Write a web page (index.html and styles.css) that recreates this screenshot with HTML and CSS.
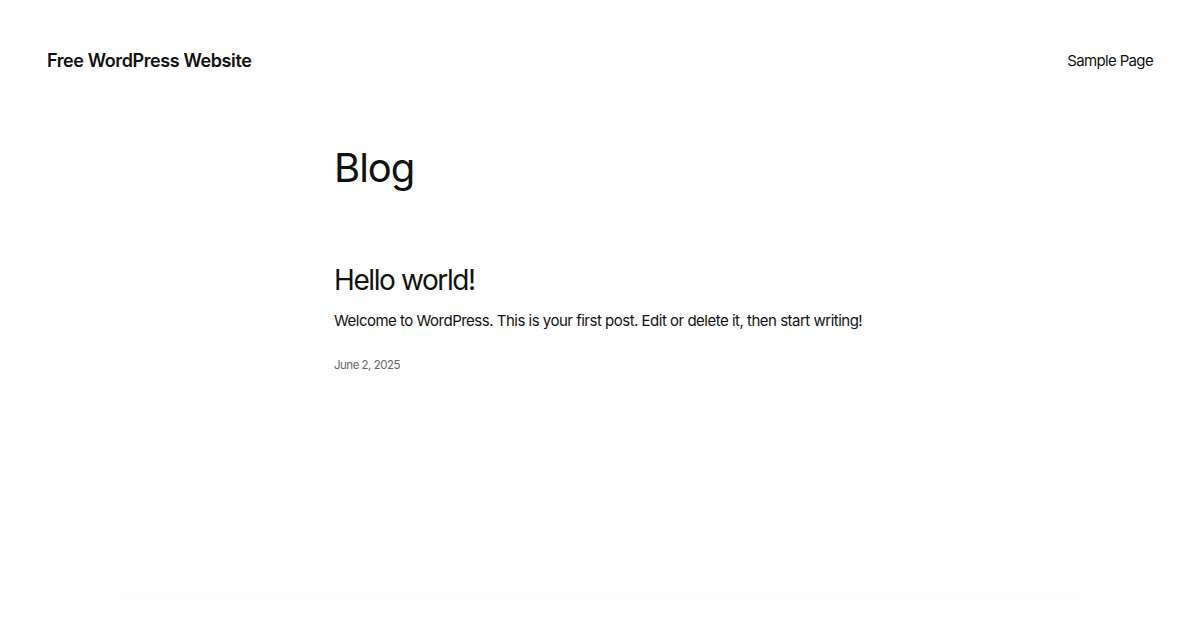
FILE: index.html
```html
<!DOCTYPE html>
<html lang="en">
<head>
<meta charset="utf-8">
<title>Free WordPress Website</title>
<link rel="stylesheet" href="styles.css">
</head>
<body>
<header class="site-header">
  <a class="site-title" href="#">Free WordPress Website</a>
  <nav class="site-nav"><a href="#">Sample Page</a></nav>
</header>
<main class="content">
  <h1 class="page-title">Blog</h1>
  <article class="post">
    <h2 class="post-title">Hello world!</h2>
    <p class="post-excerpt">Welcome to WordPress. This is your first post. Edit or delete it, then start writing!</p>
    <div class="post-date">June 2, 2025</div>
  </article>
</main>
<div class="fade-band"></div>
</body>
</html>
```
FILE: styles.css
```css
html, body {
  margin: 0;
  padding: 0;
  background: #ffffff;
  color: #111111;
  font-family: Inter, "Noto Sans", "DejaVu Sans", sans-serif;
}
body {
  width: 1200px;
  height: 630px;
  overflow: hidden;
  display: flex;
  flex-direction: column;
}
a { color: inherit; text-decoration: none; }
.site-header {
  display: flex;
  justify-content: space-between;
  align-items: center;
  padding: 48px 47px 0 47px;
  height: 24px;
}
.site-title {
  font-size: 18px;
  font-weight: 600;
  letter-spacing: -0.4px;
}
.site-nav {
  font-size: 15px;
  font-weight: 400;
  letter-spacing: -0.65px;
}
.content {
  width: 532px;
  margin: 0 auto;
}
.page-title {
  font-size: 40px;
  font-weight: 400;
  letter-spacing: -1px;
  line-height: 44px;
  margin: 74px 0 0 0;
}
.post { margin-top: 73px; }
.post-title {
  font-size: 28px;
  font-weight: 400;
  letter-spacing: -1.4px;
  line-height: 34px;
  margin: 0;
}
.post-excerpt {
  font-size: 15px;
  line-height: 22px;
  letter-spacing: -0.5px;
  margin: 13px 0 0 0;
  white-space: nowrap;
}
.post-date {
  font-size: 11.5px;
  line-height: 14px;
  color: #666;
  letter-spacing: -0.5px;
  margin-top: 26px;
}
.fade-band {
  margin: auto 120px 30px 120px;
  height: 16px;
  background: linear-gradient(to bottom, #ffffff, #fbfbfb);
}
```
